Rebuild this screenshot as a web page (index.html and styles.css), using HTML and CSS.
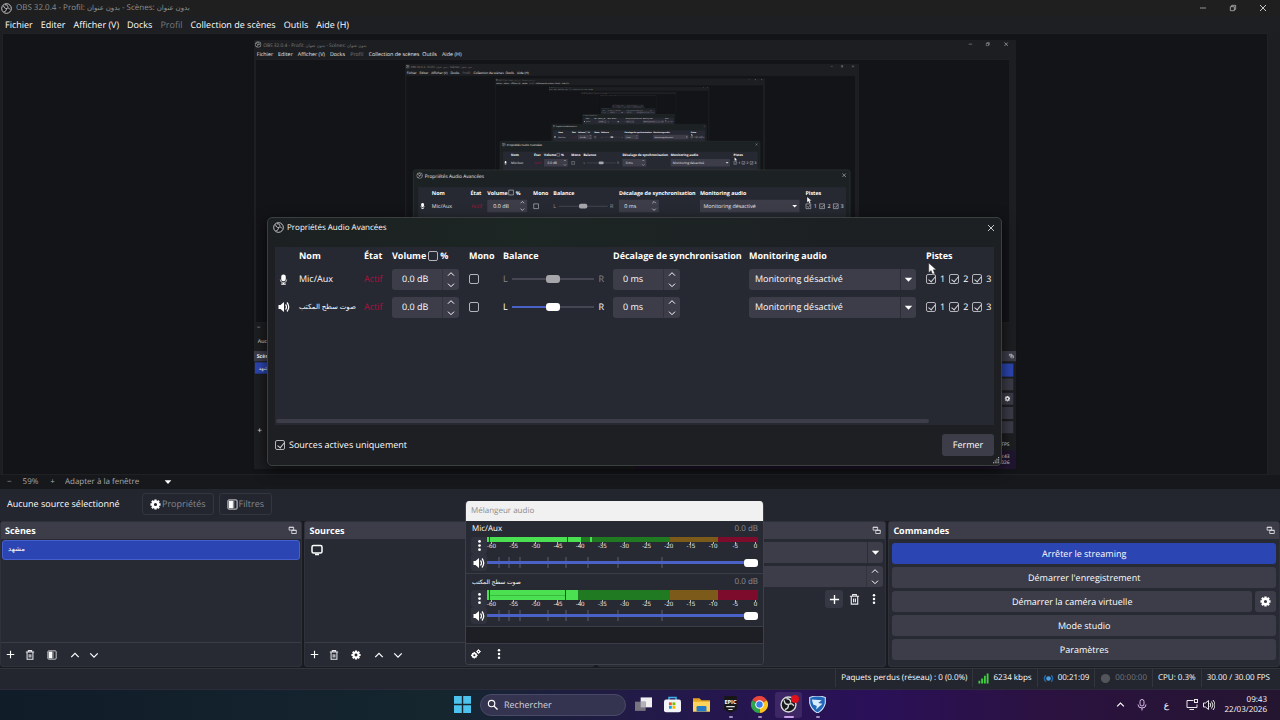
FILE: index.html
```html
<!DOCTYPE html>
<html lang="fr">
<head>
    <meta charset="UTF-8">
    <meta name="viewport" content="width=device-width, initial-scale=1.0">
    <title>OBS 32.0.4</title>
    <link rel="stylesheet" href="styles.css">
</head>
<body>
    <!-- shared icons -->
    <svg class="defs" aria-hidden="true">
        <symbol id="obs" viewBox="0 0 24 24">
            <circle cx="12" cy="12" r="10.5" fill="#17181b" stroke="#d8d8d8" stroke-width="2"/>
            <path d="M6 6c0 4 2.500 6 6 6M12 12c3.500-2 6-1 7.500 2M12 12c0 4-2 6.500-5 7M9 4c4-.5 6.500 2 6 5.500" fill="none" stroke="#d8d8d8" stroke-width="2"/>
        </symbol>
        <symbol id="gear" viewBox="0 0 24 24">
            <path fill="none" stroke="#fefefe" stroke-width="5" d="M12 6a6 6 0 1 1 0 12a6 6 0 1 1 0-12z"/>
            <path stroke="#fefefe" stroke-width="5" d="M12 1v4M12 19v4M1 12h4M19 12h4M4.200 4.200l3 3M16.800 16.800l3 3M19.800 4.200l-3 3M7.200 16.800l-3 3"/>
        </symbol>
        <symbol id="gears" viewBox="0 0 24 24">
            <circle cx="8" cy="15" r="4.500" fill="none" stroke="#fefefe" stroke-width="4"/>
            <path stroke="#fefefe" stroke-width="3" d="M8 7v3M8 20v3M0 15h3M13 15h3M3 10l2 2M13 20l-2-2M3 20l2-2"/>
            <circle cx="18" cy="6" r="3" fill="none" stroke="#fefefe" stroke-width="3"/>
            <path stroke="#fefefe" stroke-width="2" d="M18 0v2M18 10v2M12 6h2M22 6h2"/>
        </symbol>
        <symbol id="filter" viewBox="0 0 24 24">
            <rect x="2" y="2" width="20" height="20" rx="2" fill="none" stroke="#e4e4e8" stroke-width="2"/>
            <path fill="#fefefe" d="M4 4h9v16H4z"/>
            <path fill="#8d8f99" d="M13 4h3v16h-3z"/>
        </symbol>
        <symbol id="plus" viewBox="0 0 24 24"><path d="M12 2v20M2 12h20" stroke="#fefefe" stroke-width="3"/></symbol>
        <symbol id="trash" viewBox="0 0 24 24">
            <path d="M2 5h20M8 4V1.500h8V4M5 6v16h14V6M10 10v8M14 10v8" fill="none" stroke="#e8e8ec" stroke-width="2.500"/>
        </symbol>
        <symbol id="up" viewBox="0 0 24 24"><path d="M3 17l9-9 9 9" fill="none" stroke="#fefefe" stroke-width="3"/></symbol>
        <symbol id="down" viewBox="0 0 24 24"><path d="M3 8l9 9 9-9" fill="none" stroke="#fefefe" stroke-width="3"/></symbol>
        <symbol id="caret" viewBox="0 0 24 24"><path d="M2 7h20L12 18z" fill="#fefefe"/></symbol>
        <symbol id="dots" viewBox="0 0 24 24">
            <circle cx="12" cy="3" r="3" fill="#fefefe"/><circle cx="12" cy="12" r="3" fill="#fefefe"/><circle cx="12" cy="21" r="3" fill="#fefefe"/>
        </symbol>
        <symbol id="float" viewBox="0 0 24 24">
            <path d="M3 3h12v8H3zM3 4h12M10 14v-3h12v9H10zM10 12h12" fill="#3c3d49" stroke="#d4d4da" stroke-width="2.500"/>
        </symbol>
        <symbol id="speaker" viewBox="0 0 24 24">
            <path d="M1 8h4l7-6v20l-7-6H1z" fill="#fefefe"/>
            <path d="M15 7q4 5 0 10M18 3q7 9 0 18" fill="none" stroke="#fefefe" stroke-width="2.500"/>
        </symbol>
        <symbol id="mic" viewBox="0 0 24 24">
            <rect x="7" y="1" width="10" height="15" rx="5" fill="#fefefe"/>
            <path d="M5 12q0 7 7 7t7-7" fill="none" stroke="#fefefe" stroke-width="1.500"/>
            <path d="M12 19v4M7 22h10" fill="none" stroke="#fefefe" stroke-width="2.500"/>
        </symbol>
        <symbol id="screen" viewBox="0 0 24 24">
            <rect x="2" y="3" width="20" height="15" rx="3" fill="none" stroke="#fefefe" stroke-width="3"/>
            <path d="M8 21h8" stroke="#fefefe" stroke-width="3"/>
        </symbol>
        <symbol id="minimize" viewBox="0 0 24 24"><path d="M3 12h18" stroke="#d0d0d0" stroke-width="2"/></symbol>
        <symbol id="restore" viewBox="0 0 24 24"><path d="M4 8h12v12H4zM8 8V4h12v12h-4" fill="none" stroke="#d0d0d0" stroke-width="2"/></symbol>
        <symbol id="close" viewBox="0 0 24 24"><path d="M3 3l18 18M21 3L3 21" stroke="#e8e8e8" stroke-width="2.500"/></symbol>
        <symbol id="pointer" viewBox="0 0 12 18"><path d="M1 1v13l3-3 2 5 3-1-2-5h4z" fill="#fff" stroke="#222" stroke-width=".6"/></symbol>

        <!-- captured desktop, without and with the properties window -->
        <symbol id="desk" viewBox="0 0 1280 720">
            <rect width="1280" height="720" fill="#1d1e21"/>
            <rect x="3" y="33" width="1266" height="441" fill="#131418" stroke="#25262a"/>
            <use href="#obs" x="2" y="2" width="11" height="11"/>
            <text class="cap-title" x="16" y="11">OBS 32.0.4 - Profil: <tspan class="ar">بدون عنوان</tspan> - Scènes: <tspan class="ar">بدون عنوان</tspan></text>
            <g class="cap-menu">
                <text x="5" y="27">Fichier</text><text x="41" y="27">Editer</text><text x="74" y="27">Afficher (V)</text>
                <text x="128" y="27">Docks</text><text x="162" y="27" opacity=".4">Profil</text>
                <text x="193" y="27">Collection de scènes</text><text x="283" y="27">Outils</text><text x="316" y="27">Aide (H)</text>
            </g>
            <use href="#minimize" x="1199" y="3" width="8" height="8"/>
            <use href="#restore" x="1228" y="3" width="8" height="8"/>
            <use href="#close" x="1259" y="3" width="8" height="8"/>
            <path d="M6 482h5" stroke="#aaa"/>
            <text class="cap-menu" x="7" y="508">Aucune source</text>
            <path fill="#3c3d49" d="M0 522h300v17H0zM889 522h391v17H889z"/>
            <text class="cap-head" x="5" y="534">Scènes</text>
            <rect x="2" y="541" width="298" height="19" fill="#2b45b0"/>
            <text class="cap-menu" x="8" y="554">مشهد</text>
            <use href="#float" x="1267" y="526" width="9" height="9"/>
            <rect x="893" y="543" width="382" height="22" fill="#2b45b0"/>
            <path fill="#3a3b46" d="M893 568h382v20H893zM893 592h382v20H893zM893 616h382v20H893zM893 640h382v20H893z"/>
            <use href="#gear" x="1260" y="597" width="10" height="10"/>
            <use href="#plus" x="6" y="651" width="8" height="8"/>
            <text class="cap-small" x="1205" y="681">30.00 / 30.00 FPS</text>
            <path fill="#20152f" d="M640 689h640v31H640z"/>
            <text class="cap-small" x="1248" y="702">09:43</text>
            <text class="cap-small" x="1226" y="712">22/03/2026</text>
        </symbol>
        <symbol id="props" viewBox="0 0 1280 720">
            <rect x="268" y="218" width="733" height="247" rx="4" fill="#1c2123" stroke="#34393a"/>
            <rect x="276" y="247" width="718" height="178" fill="#272932"/>
            <use href="#obs" x="273" y="222" width="11" height="11"/>
            <text class="cap-small" x="287" y="231">Propriétés Audio Avancées</text>
            <use href="#close" x="987" y="223" width="8" height="8"/>
            <g class="cap-head">
                <text x="299" y="260">Nom</text><text x="364" y="260">État</text><text x="392" y="260">Volume</text><text x="440" y="260">%</text>
                <text x="469" y="260">Mono</text><text x="503" y="260">Balance</text><text x="613" y="260">Décalage de synchronisation</text>
                <text x="749" y="260">Monitoring audio</text><text x="926" y="260">Pistes</text>
            </g>
            <use href="#mic" x="278" y="273" width="11" height="11"/>
            <path fill="#3c3d49" d="M392 268h67v21h-67zM613 268h67v21h-67zM749 268h167v21H749z"/>
            <g class="cap-menu">
                <text x="299" y="282">Mic/Aux</text><text class="cap-state" x="365" y="282">Actif</text><text x="402" y="282">0.0 dB</text>
                <text x="503" y="282" opacity=".5">L</text><text x="598" y="282" opacity=".5">R</text><text x="622" y="282">0 ms</text>
                <text x="755" y="282">Monitoring désactivé</text><text x="940" y="282">1</text><text x="963" y="282">2</text><text x="985" y="282">3</text>
            </g>
            <path d="M512 279h82" stroke="#454652" stroke-width="2"/>
            <rect x="546" y="275" width="14" height="8" rx="3" fill="#a5a5aa"/>
            <path fill="none" stroke="#c8c8cc" d="M470 275h8v8h-8zM428 252h8v8h-8zM927 275h8v8h-8zM950 275h8v8h-8zM973 275h8v8h-8zM929 279l2 2 3-4M952 279l2 2 3-4M975 279l2 2 3-4"/>
            <path fill="none" stroke="#fefefe" d="M448 274l3-3 3 3M448 283l3 3 3-3M669 274l3-3 3 3M669 283l3 3 3-3"/>
            <path fill="#fefefe" d="M904 277h8l-4 4z"/>
            <use href="#pointer" x="928" y="262" width="9" height="14"/>
        </symbol>
    </svg>

    <div class="obs">
        <header class="titlebar">
            <svg class="i11"><use href="#obs"/></svg>
            <h1>OBS 32.0.4 - Profil: <bdi class="ar">بدون عنوان</bdi> - Scènes: <bdi class="ar">بدون عنوان</bdi></h1>
            <div class="win-buttons">
                <button aria-label="Réduire"><svg class="i8"><use href="#minimize"/></svg></button>
                <button aria-label="Restaurer"><svg class="i8"><use href="#restore"/></svg></button>
                <button aria-label="Quitter"><svg class="i8"><use href="#close"/></svg></button>
            </div>
        </header>
        <nav class="menubar">
            <button>Fichier</button>
            <button>Editer</button>
            <button>Afficher (V)</button>
            <button>Docks</button>
            <button disabled>Profil</button>
            <button>Collection de scènes</button>
            <button>Outils</button>
            <button>Aide (H)</button>
        </nav>

        <main class="preview">
            <svg class="canvas" viewBox="0 0 1280 720">
                <use href="#desk"/>
                <svg x="254" y="40" width="762" height="429" viewBox="0 0 1280 720">
                    <use href="#desk"/>
                    <svg x="254" y="40" width="762" height="429" viewBox="0 0 1280 720">
                        <use href="#desk"/>
                        <svg x="254" y="40" width="762" height="429" viewBox="0 0 1280 720">
                            <use href="#desk"/>
                            <svg x="254" y="40" width="762" height="429" viewBox="0 0 1280 720">
                                <use href="#desk"/>
                                <svg x="254" y="40" width="762" height="429" viewBox="0 0 1280 720">
                                    <use href="#desk"/>
                                    <use href="#props"/>
                                </svg>
                                <use href="#props"/>
                            </svg>
                            <use href="#props"/>
                        </svg>
                        <use href="#props"/>
                    </svg>
                    <use href="#props"/>
                </svg>
                <use href="#props"/>
            </svg>
        </main>

        <div class="zoombar">
            <button>−</button>
            <span>59%</span>
            <button class="plus">+</button>
            <label class="fit">
                <select aria-label="Échelle"><option>Adapter à la fenêtre</option></select>
                <svg class="i8"><use href="#caret"/></svg>
            </label>
        </div>

        <div class="source-bar">
            <span class="source-name">Aucune source sélectionné</span>
            <button disabled><svg class="i11"><use href="#gear"/></svg>Propriétés</button>
            <button disabled><svg class="i11"><use href="#filter"/></svg>Filtres</button>
        </div>

        <div class="docks">
            <section class="dock">
                <h2>Scènes <svg class="i9"><use href="#float"/></svg></h2>
                <ul class="list">
                    <li class="selected"><bdi class="ar">مشهد</bdi></li>
                </ul>
                <div class="tools">
                    <button aria-label="Ajouter"><svg class="i9"><use href="#plus"/></svg></button>
                    <button aria-label="Supprimer"><svg class="i10"><use href="#trash"/></svg></button>
                    <button class="wide" aria-label="Filtres"><svg class="i10"><use href="#filter"/></svg></button>
                    <button aria-label="Monter"><svg class="i10"><use href="#up"/></svg></button>
                    <button aria-label="Descendre"><svg class="i10"><use href="#down"/></svg></button>
                </div>
            </section>
            <section class="dock">
                <h2>Sources</h2>
                <ul class="list">
                    <li><svg class="i12"><use href="#screen"/></svg></li>
                </ul>
                <div class="tools">
                    <button aria-label="Ajouter"><svg class="i9"><use href="#plus"/></svg></button>
                    <button aria-label="Supprimer"><svg class="i10"><use href="#trash"/></svg></button>
                    <button class="wide" aria-label="Propriétés"><svg class="i10"><use href="#gear"/></svg></button>
                    <button aria-label="Monter"><svg class="i10"><use href="#up"/></svg></button>
                    <button aria-label="Descendre"><svg class="i10"><use href="#down"/></svg></button>
                </div>
            </section>
            <section class="dock" aria-label="Transitions">
                <h2><svg class="i9"><use href="#float"/></svg></h2>
                <div class="transition">
                    <label class="combo"><select aria-label="Transition"><option></option></select><svg class="i9"><use href="#caret"/></svg></label>
                    <div class="spin"><input type="text" aria-label="Durée"><span class="arrows"><svg class="i8"><use href="#up"/></svg><svg class="i8"><use href="#down"/></svg></span></div>
                    <div class="transition-tools">
                        <button class="boxed" aria-label="Ajouter"><svg class="i11"><use href="#plus"/></svg></button>
                        <button aria-label="Supprimer"><svg class="i11"><use href="#trash"/></svg></button>
                        <button aria-label="Options"><svg class="i10"><use href="#dots"/></svg></button>
                    </div>
                </div>
            </section>
            <section class="dock">
                <h2>Commandes <svg class="i9"><use href="#float"/></svg></h2>
                <div class="commands">
                    <button class="active">Arrêter le streaming</button>
                    <button>Démarrer l'enregistrement</button>
                    <div class="split">
                        <button>Démarrer la caméra virtuelle</button>
                        <button aria-label="Configurer"><svg class="i11"><use href="#gear"/></svg></button>
                    </div>
                    <button>Mode studio</button>
                    <button>Paramètres</button>
                </div>
            </section>
        </div>

        <footer class="status">
            <span>Paquets perdus (réseau) : 0 (0.0%)</span>
            <span><svg class="i11" viewBox="0 0 24 24"><path d="M1 17h4v6H1zM7 12h4v11H7zM13 6h4v17h-4zM19 1h4v22h-4z" fill="#3fd13f"/></svg>6234 kbps</span>
            <span><svg class="i11" viewBox="0 0 24 24"><circle cx="12" cy="12" r="5" fill="#4aa3e8"/><path d="M6 5q-6 7 0 14M18 5q6 7 0 14" fill="none" stroke="#2568a8" stroke-width="3"/></svg>00:21:09</span>
            <span class="off"><svg class="i11" viewBox="0 0 24 24"><circle cx="12" cy="12" r="10" fill="#54555a"/></svg>00:00:00</span>
            <span>CPU: 0.3%</span>
            <span>30.00 / 30.00 FPS</span>
        </footer>
    </div>

    <section class="mixer" aria-label="Mélangeur audio">
        <h2>Mélangeur audio</h2>
        <div class="channel">
            <div class="name"><label for="vol1">Mic/Aux</label><span>0.0 dB</span></div>
            <button aria-label="Options"><svg class="i11"><use href="#dots"/></svg></button>
            <div>
                <svg class="meter" viewBox="0 0 271 5" preserveAspectRatio="none">
                    <path fill="#1f7a22" d="M0 0h183v5H0z"/><path fill="#7c5a1a" d="M183 0h48v5h-48z"/><path fill="#7d0b2b" d="M231 0h40v5h-40z"/>
                    <path fill="#4be052" d="M0 0h94v5H0zM103 0h2v5h-2z"/><path fill="#14551a" d="M2 0h1v5H2zM80 0h1v5h-1z"/>
                </svg>
                <div class="scale"><i>-60</i><i>-55</i><i>-50</i><i>-45</i><i>-40</i><i>-35</i><i>-30</i><i>-25</i><i>-20</i><i>-15</i><i>-10</i><i>-5</i><i>0</i></div>
            </div>
            <button aria-label="Muet"><svg class="i12"><use href="#speaker"/></svg></button>
            <div class="fader">
                <svg viewBox="0 0 271 11" preserveAspectRatio="none"><path d="M12 0v11M22 0v11M33 0v11M61 0v11M79 0v11M101 0v11M131 0v11M175 0v11" stroke="#5a5f78"/></svg>
                <input id="vol1" type="range" value="100">
            </div>
        </div>
        <div class="channel">
            <div class="name"><label class="ar" for="vol2">صوت سطح المكتب</label><span>0.0 dB</span></div>
            <button aria-label="Options"><svg class="i11"><use href="#dots"/></svg></button>
            <div>
                <svg class="meter stereo" viewBox="0 0 271 10" preserveAspectRatio="none">
                    <path fill="#1f7a22" d="M0 0h183v10H0z"/><path fill="#7c5a1a" d="M183 0h48v10h-48z"/><path fill="#7d0b2b" d="M231 0h40v10h-40z"/>
                    <path fill="#4be052" d="M0 0h91v10H0z"/><path fill="#14551a" d="M2 0h1v10H2zM78 0h1v10h-1z"/><path fill="#38bb3e" d="M3 5h75v1H3z"/>
                </svg>
                <div class="scale"><i>-60</i><i>-55</i><i>-50</i><i>-45</i><i>-40</i><i>-35</i><i>-30</i><i>-25</i><i>-20</i><i>-15</i><i>-10</i><i>-5</i><i>0</i></div>
            </div>
            <button aria-label="Muet"><svg class="i12"><use href="#speaker"/></svg></button>
            <div class="fader">
                <svg viewBox="0 0 271 11" preserveAspectRatio="none"><path d="M12 0v11M22 0v11M33 0v11M61 0v11M79 0v11M101 0v11M131 0v11M175 0v11" stroke="#5a5f78"/></svg>
                <input id="vol2" type="range" value="100">
            </div>
        </div>
        <div class="mixer-tools">
            <button aria-label="Propriétés avancées"><svg class="i10"><use href="#gears"/></svg></button>
            <button aria-label="Menu"><svg class="i10"><use href="#dots"/></svg></button>
        </div>
    </section>

    <section class="dialog" role="dialog" aria-label="Propriétés Audio Avancées">
        <header>
            <svg class="i11"><use href="#obs"/></svg>
            <h2>Propriétés Audio Avancées</h2>
            <button aria-label="Fermer la fenêtre"><svg class="i8"><use href="#close"/></svg></button>
        </header>
        <div class="sheet">
            <table>
                <colgroup>
                    <col class="c-icon"><col class="c-name"><col class="c-state"><col class="c-volume"><col class="c-mono"><col class="c-balance"><col class="c-sync"><col class="c-monitor"><col>
                </colgroup>
                <thead>
                    <tr>
                        <th></th><th>Nom</th><th>État</th>
                        <th><label class="percent">Volume<input type="checkbox">%</label></th>
                        <th>Mono</th><th>Balance</th><th>Décalage de synchronisation</th><th>Monitoring audio</th><th>Pistes</th>
                    </tr>
                </thead>
                <tbody>
                    <tr>
                        <td class="kind"><svg class="i11"><use href="#mic"/></svg></td>
                        <td>Mic/Aux</td>
                        <td class="state">Actif</td>
                        <td><div class="spin"><input type="text" value="0.0 dB" aria-label="Volume"><span class="arrows"><svg class="i8"><use href="#up"/></svg><svg class="i8"><use href="#down"/></svg></span></div></td>
                        <td><input type="checkbox" aria-label="Mono"></td>
                        <td><div class="balance off"><span>L</span><input type="range" aria-label="Balance" disabled><span>R</span></div></td>
                        <td><div class="spin"><input type="text" value="0 ms" aria-label="Décalage"><span class="arrows"><svg class="i8"><use href="#up"/></svg><svg class="i8"><use href="#down"/></svg></span></div></td>
                        <td><label class="combo"><select aria-label="Monitoring"><option>Monitoring désactivé</option></select><svg class="i9"><use href="#caret"/></svg></label></td>
                        <td><div class="tracks"><label><input type="checkbox" checked>1</label><label><input type="checkbox" checked>2</label><label><input type="checkbox" checked>3</label></div></td>
                    </tr>
                    <tr>
                        <td class="kind"><svg class="i12"><use href="#speaker"/></svg></td>
                        <td><bdi class="ar">صوت سطح المكتب</bdi></td>
                        <td class="state">Actif</td>
                        <td><div class="spin"><input type="text" value="0.0 dB" aria-label="Volume"><span class="arrows"><svg class="i8"><use href="#up"/></svg><svg class="i8"><use href="#down"/></svg></span></div></td>
                        <td><input type="checkbox" aria-label="Mono"></td>
                        <td><div class="balance"><span>L</span><input type="range" aria-label="Balance"><span>R</span></div></td>
                        <td><div class="spin"><input type="text" value="0 ms" aria-label="Décalage"><span class="arrows"><svg class="i8"><use href="#up"/></svg><svg class="i8"><use href="#down"/></svg></span></div></td>
                        <td><label class="combo"><select aria-label="Monitoring"><option>Monitoring désactivé</option></select><svg class="i9"><use href="#caret"/></svg></label></td>
                        <td><div class="tracks"><label><input type="checkbox" checked>1</label><label><input type="checkbox" checked>2</label><label><input type="checkbox" checked>3</label></div></td>
                    </tr>
                </tbody>
            </table>
            <div class="scrollbar"></div>
        </div>
        <footer>
            <label><input type="checkbox" checked>Sources actives uniquement</label>
            <button>Fermer</button>
        </footer>
        <svg class="grip" viewBox="0 0 8 8"><path d="M6 0h1v1H6zM4 2h1v1H4zM6 2h1v1H6zM2 4h1v1H2zM4 4h1v1H4zM6 4h1v1H6zM0 6h1v1H0zM2 6h1v1H2zM4 6h1v1H4zM6 6h1v1H6z" fill="#ddd"/></svg>
    </section>
    <svg class="pointer"><use href="#pointer"/></svg>

    <footer class="taskbar">
        <div class="apps">
            <button aria-label="Démarrer"><svg class="i17" viewBox="0 0 24 24"><path d="M0 0h11v11H0zM13 0h11v11H13zM0 13h11v11H0zM13 13h11v11H13z" fill="#4cc3ee"/></svg></button>
            <label class="search">
                <svg class="i11" viewBox="0 0 24 24"><circle cx="10" cy="10" r="7" fill="none" stroke="#fff" stroke-width="2.500"/><path d="M15 15l8 8" stroke="#fff" stroke-width="3"/></svg>
                <input type="text" placeholder="Rechercher" aria-label="Rechercher">
            </label>
            <button aria-label="Vue des tâches"><svg class="i17" viewBox="0 0 24 24"><path d="M8 2h16v14H8z" fill="#f0f0f0"/><path d="M0 8h15v13H0z" fill="#77747f"/><path d="M8 8h7v8H8z" fill="#b4b2b8"/></svg></button>
            <button aria-label="Store"><svg class="i17" viewBox="0 0 24 24"><path d="M7 6V2h10v4" fill="none" stroke="#41b4ec" stroke-width="2"/><rect y="5" width="24" height="18" rx="3" fill="#f2f4f8"/><path d="M7 9h4v4H7z" fill="#f25022"/><path d="M12 9h4v4h-4z" fill="#7fba00"/><path d="M7 14h4v4H7z" fill="#00a4ef"/><path d="M12 14h4v4h-4z" fill="#ffb900"/></svg></button>
            <button aria-label="Explorateur"><svg class="i17" viewBox="0 0 24 24"><path d="M0 3h9l3 3h12v16H0z" fill="#e6a422"/><path d="M0 8h24v14H0z" fill="#ffd35c"/><path d="M5 22v-6q0-2 2-2h10q2 0 2 2v6z" fill="#2579c6"/></svg></button>
            <button class="running" aria-label="Epic Games">
                <svg class="i17" viewBox="0 0 24 24"><path d="M3 0h18v19l-9 5-9-5z" fill="#17171a"/><text class="epic" x="12" y="11">EPIC</text><path d="M6 15h12M9 19h6" stroke="#ddd" stroke-width="1.500"/></svg>
            </button>
            <button class="running" aria-label="Chrome"><svg class="i17" viewBox="0 0 24 24"><path d="M12 12L1.600 6A12 12 0 0 1 22.400 6z" fill="#e8453c"/><path d="M12 12L22.400 6A12 12 0 0 1 12 24z" fill="#fbc31e"/><path d="M12 12v12A12 12 0 0 1 1.600 6z" fill="#2fa44f"/><circle cx="12" cy="12" r="6" fill="#fff"/><circle cx="12" cy="12" r="4.500" fill="#3b7ded"/></svg></button>
            <button class="running current" aria-label="OBS Studio"><svg class="i17"><use href="#obs"/></svg></button>
            <button class="running" aria-label="Rocket League"><svg class="i17" viewBox="0 0 24 24"><path d="M1 2q11-4 22 0v8q-2 9-11 14Q3 19 1 10z" fill="#2166b8" stroke="#cfe6fa" stroke-width="1.500"/><path d="M4 5l14 1-5 4 6 1-9 8 1-5-5-2z" fill="#d9ecfb"/></svg></button>
        </div>
        <div class="tray">
            <button aria-label="Icônes cachées"><svg class="i9"><use href="#up"/></svg></button>
            <svg class="i12 tray-mic" viewBox="0 0 24 24"><rect x="8" y="1" width="8" height="13" rx="4" fill="none" stroke="#d8b8e8" stroke-width="2"/><path d="M4 11q0 7 8 7t8-7M12 18v5" fill="none" stroke="#d8b8e8" stroke-width="2"/></svg>
            <span class="lang">ع</span>
            <svg class="i12" viewBox="0 0 24 24"><path d="M15 3H2v14h20v-6M7 21h9" fill="none" stroke="#e8e8e8" stroke-width="2"/><rect x="17" y="1" width="6" height="6" fill="none" stroke="#e8e8e8" stroke-width="2"/></svg>
            <svg class="i12" viewBox="0 0 24 24"><path d="M1 8h4l6-5v18l-6-5H1zM14 8q3 4 0 8M17 5q6 7 0 14M20 2q8 10 0 20" fill="none" stroke="#e8e8e8" stroke-width="2"/></svg>
            <time>09:43<br>22/03/2026</time>
        </div>
    </footer>
</body>
</html>
```
FILE: styles.css
```css
* {
    box-sizing: border-box;
}
body {
    margin: 0;
    height: 100vh;
    display: flex;
    flex-direction: column;
    overflow: hidden;
    background: #1d1e22;
    color: #fefefe;
    font-family: "Open Sans", "DejaVu Sans", sans-serif;
    font-size: 9px;
    line-height: 12px;
    text-rendering: geometricPrecision;
}
button, input, select {
    font: inherit;
    color: inherit;
    margin: 0;
    padding: 0;
    border: 0;
    background: none;
    text-rendering: inherit;
}
button {
    display: flex;
    align-items: center;
    justify-content: center;
}
h1, h2 {
    margin: 0;
    font-size: 9px;
    font-weight: 400;
}
svg {
    display: block;
    flex: none;
}
.defs {
    display: none;
}
.ar {
    font-size: 7px;
}
.i8 { width: 8px; height: 8px; }
.i9 { width: 9px; height: 9px; }
.i10 { width: 10px; height: 10px; }
.i11 { width: 11px; height: 11px; }
.i12 { width: 12px; height: 12px; }
.i17 { width: 17px; height: 17px; }

/* main window */
.obs {
    flex: 1;
    min-height: 0;
    display: flex;
    flex-direction: column;
}
.titlebar {
    height: 16px;
    display: flex;
    align-items: center;
    gap: 4px;
    padding: 0 13px 0 1px;
    background: #1f1f1f;
}
.titlebar h1 {
    flex: 1;
    color: #909090;
    font-size: 8px;
}
.win-buttons {
    display: flex;
    gap: 22px;
}
.menubar {
    height: 17px;
    display: flex;
    align-items: center;
    gap: 8px;
    padding: 0 5px;
    background: #1d1f22;
}
.menubar button:disabled {
    color: #777;
}
.preview {
    flex: 1;
    min-height: 0;
    display: flex;
    margin: 0 12px 0 2px;
    padding: 6px 0 5px;
    border: 1px solid #202125;
    background: #131418;
}
.canvas {
    width: 100%;
    height: 100%;
}
.cap-title {
    font-size: 8px;
    fill: #808080;
}
.cap-menu {
    font-size: 9px;
    fill: #e6e6e6;
}
.cap-small {
    font-size: 8px;
    fill: #e6e6e6;
}
.cap-head {
    font-size: 9px;
    font-weight: 700;
    fill: #fefefe;
}
.cap-state {
    fill: #a8123f;
}

.zoombar {
    height: 14px;
    display: flex;
    align-items: center;
    padding-left: 7px;
    background: #17181b;
    color: #a8a8ac;
    font-size: 8px;
}
.zoombar span {
    margin-left: 11px;
}
.zoombar .plus {
    margin: 0 10px 0 12px;
}
.fit {
    display: flex;
    align-items: center;
}
.fit select {
    width: 99px;
    appearance: none;
}

.source-bar {
    height: 32px;
    display: flex;
    align-items: center;
    gap: 5px;
    padding: 0 0 2px 7px;
    background: #23262e;
}
.source-name {
    width: 130px;
}
.source-bar button {
    height: 22px;
    padding: 0 7px;
    gap: 1px;
    border: 1px solid #33353f;
    border-radius: 3px;
    color: #85868e;
}

/* docks */
.docks {
    height: 147px;
    display: grid;
    grid-template-columns: 302fr 290fr 289fr 391fr;
    gap: 2px;
    padding-bottom: 1px;
    background: #1a1b20;
}
.dock {
    display: flex;
    flex-direction: column;
    background: #272a33;
    border: 1px solid #30323b;
    border-radius: 3px;
}
.dock h2 {
    height: 17px;
    flex: none;
    display: flex;
    align-items: center;
    padding: 0 4px;
    background: #3c3d49;
    font-weight: 700;
}
.dock h2 svg {
    margin-left: auto;
}
.list {
    flex: 1;
    margin: 0;
    padding: 1px;
    list-style: none;
}
.list li {
    height: 20px;
    display: flex;
    align-items: center;
    padding: 0 5px;
}
.list .selected {
    background: #2b45b3;
    border: 1px solid #4560cc;
    border-radius: 3px;
}
.tools {
    height: 24px;
    display: flex;
    align-items: center;
    border-top: 1px solid #3a3c46;
}
.tools button {
    width: 19px;
    height: 18px;
}
.tools .wide {
    width: 26px;
}
.transition {
    display: flex;
    flex-direction: column;
    gap: 3px;
    padding: 3px 2px;
}
.transition-tools {
    display: flex;
    justify-content: flex-end;
    gap: 2px;
}
.transition-tools button {
    width: 18px;
    height: 18px;
}
.transition-tools .boxed {
    background: #363843;
    border-radius: 3px;
}
.commands {
    display: flex;
    flex-direction: column;
    gap: 3px;
    padding: 4px 3px;
}
.commands button {
    flex: 1;
    min-height: 21px;
    background: #3c3d49;
    border-radius: 3px;
}
.commands .active {
    background: #2b45b3;
}
.split {
    display: flex;
    gap: 3px;
}
.commands .split button:last-child {
    flex: none;
    width: 21px;
}

.status {
    height: 21px;
    display: flex;
    justify-content: flex-end;
    padding: 0 5px 2px 0;
    background: #23262e;
    border-top: 1px solid #33353d;
    font-size: 8px;
}
.status span {
    display: flex;
    align-items: center;
    gap: 4px;
    padding: 0 5px;
    border-left: 1px solid #33353d;
}
.status .off {
    color: #77787e;
}

/* form controls */
input[type="checkbox"] {
    appearance: none;
    width: 10px;
    height: 10px;
    flex: none;
    display: block;
    border: 1px solid #b4b5bc;
    border-radius: 2px;
}
input[type="checkbox"]:checked::before {
    content: "";
    display: block;
    width: 3px;
    height: 6px;
    margin: 0 0 0 3px;
    border: solid #d8d8dc;
    border-width: 0 1px 1px 0;
    transform: rotate(40deg);
}
input[type="range"] {
    appearance: none;
    display: block;
    min-width: 0;
    height: 9px;
    background: linear-gradient(#4a62c8, #4a62c8) center / 100% 3px no-repeat;
}
input[type="range"]::-webkit-slider-thumb {
    appearance: none;
    width: 14px;
    height: 8px;
    border-radius: 3px;
    background: #fff;
}
.spin, .combo {
    display: flex;
    height: 21px;
    background: #3c3d49;
    border-radius: 3px;
}
.spin input {
    flex: 1;
    min-width: 0;
    padding-left: 10px;
}
.arrows {
    width: 17px;
    display: flex;
    flex-direction: column;
    align-items: center;
    justify-content: space-between;
    padding: 1px 0;
    border-left: 1px solid #31323c;
}
.combo {
    align-items: center;
    padding-right: 3px;
}
.combo select {
    flex: 1;
    height: 21px;
    margin-right: 3px;
    padding-left: 6px;
    appearance: none;
    border-right: 1px solid #2b2c36;
}

/* audio mixer */
.mixer {
    position: absolute;
    left: 465px;
    bottom: 55px;
    width: 299px;
    height: 164px;
    display: flex;
    flex-direction: column;
    overflow: hidden;
    border: 1px solid #3e404a;
    border-top: 0;
    border-radius: 4px;
    background: #1d1f25;
}
.mixer h2 {
    height: 20px;
    padding: 4px 5px;
    background: #f1f1f1;
    color: #8c8c8c;
    font-size: 8px;
}
.channel {
    display: grid;
    grid-template-columns: 16px 1fr;
    grid-template-rows: 16px 17px 17px;
    padding: 0 5px 2px;
    border-bottom: 1px solid #3a3c46;
    background: #272a33;
}
.channel > button {
    background: #30323d;
    border-radius: 3px;
}
.name {
    grid-column: 1 / 3;
    display: flex;
    align-items: center;
    justify-content: space-between;
    padding-left: 1px;
    font-size: 8px;
}
.name .ar {
    font-size: 6px;
}
.name span {
    color: #8f9098;
}
.meter {
    width: 100%;
    height: 5px;
}
.stereo {
    height: 10px;
}
.scale {
    display: flex;
    justify-content: space-between;
    font-size: 6px;
    line-height: 8px;
}
.scale i {
    width: 9px;
    font-style: normal;
    text-align: center;
    background: linear-gradient(#b0b0b6, #b0b0b6) top / 1px 2px no-repeat;
}
.scale i:last-child {
    width: 5px;
}
.fader {
    display: grid;
    align-items: center;
}
.fader svg, .fader input {
    grid-area: 1 / 1;
    width: 100%;
    height: 11px;
}
.mixer-tools {
    height: 21px;
    display: flex;
    align-items: center;
    gap: 13px;
    margin-top: auto;
    padding-left: 5px;
    background: #272a33;
    border-top: 1px solid #3a3c46;
}

/* advanced audio properties */
.dialog {
    position: absolute;
    left: 267px;
    top: 217px;
    width: 735px;
    height: 249px;
    display: flex;
    flex-direction: column;
    padding: 0 7px;
    border: 1px solid #3b403f;
    border-radius: 5px;
    background: #1d1f23 linear-gradient(to right, #1c2022, #1c2623 35%, #1d2023 75%) top / 100% 29px no-repeat;
    box-shadow: 0 4px 14px #000a;
}
.dialog header {
    height: 19px;
    flex: none;
    display: flex;
    align-items: center;
    gap: 3px;
    margin: 0 -1px 0 -2px;
}
.dialog h2 {
    font-size: 8px;
}
.dialog header button {
    margin-left: auto;
    width: 8px;
}
.sheet {
    flex: 1;
    display: flex;
    flex-direction: column;
    margin-top: 10px;
    padding: 0 0 2px 1px;
    background: #272932;
}
.sheet table {
    width: 100%;
    table-layout: fixed;
    border-collapse: collapse;
}
.sheet th, .sheet td {
    padding: 0;
    text-align: left;
    white-space: nowrap;
}
.sheet th {
    height: 18px;
}
.sheet td {
    height: 28px;
}
.c-icon { width: 23px; }
.c-name { width: 65px; }
.c-state { width: 28px; }
.c-volume { width: 77px; }
.c-mono { width: 34px; }
.c-balance { width: 110px; }
.c-sync { width: 136px; }
.c-monitor { width: 177px; }
.kind svg {
    margin-left: 2px;
}
.sheet .state {
    color: #a8123f;
}
.percent {
    display: flex;
    align-items: center;
    gap: 2px;
}
.sheet .spin {
    width: 67px;
}
.sheet .combo {
    width: 167px;
}
.balance {
    width: 101px;
    display: flex;
    align-items: center;
    gap: 4px;
}
.balance input {
    flex: 1;
    background-image: linear-gradient(to right, #4a62c8 50%, #454652 50%);
    background-size: 100% 2px;
}
.balance.off {
    color: #85868e;
}
.balance.off input {
    background-image: linear-gradient(#454652, #454652);
}
.balance.off input::-webkit-slider-thumb {
    background: #a5a5aa;
}
.tracks {
    display: flex;
    gap: 4px;
}
.tracks label {
    display: flex;
    align-items: center;
    gap: 4px;
}
.scrollbar {
    height: 4px;
    width: 91%;
    margin-top: auto;
    background: #3c3d49;
    border-radius: 2px;
}
.dialog footer {
    height: 40px;
    flex: none;
    display: flex;
    align-items: center;
    justify-content: space-between;
}
.dialog footer label {
    display: flex;
    align-items: center;
    gap: 4px;
}
.dialog footer button {
    width: 52px;
    height: 22px;
    background: #3c3d49;
    border-radius: 3px;
}
.grip {
    position: absolute;
    right: 1px;
    bottom: 1px;
    width: 7px;
    height: 7px;
}
.pointer {
    position: absolute;
    left: 928px;
    top: 262px;
    width: 9px;
    height: 14px;
}

/* taskbar */
.taskbar {
    height: 31px;
    display: grid;
    grid-template-columns: 1fr auto 1fr;
    align-items: center;
    padding-bottom: 1px;
    border-top: 1px solid #2c2a3c;
    background: linear-gradient(to right, #101c28, #15262f 35%, #221a48 50%, #2a1058 68%, #2b1240 82%, #241530);
}
.apps {
    grid-column: 2;
    display: flex;
    align-items: center;
    gap: 2px;
}
.apps button {
    position: relative;
    width: 27px;
    height: 26px;
    border-radius: 3px;
}
.search {
    width: 146px;
    height: 22px;
    margin: 0 2px;
    display: flex;
    align-items: center;
    gap: 6px;
    padding-left: 6px;
    border: 1px solid #4a4a68;
    border-radius: 11px;
    background: #343450;
}
.search input {
    width: 100px;
    outline: 0;
}
.search input::placeholder {
    color: #d4d4dc;
}
.running::after {
    content: "";
    position: absolute;
    bottom: 0;
    width: 4px;
    height: 2px;
    border-radius: 1px;
    background: #a08cc0;
}
.apps .current {
    background: #3d2764;
}
.current::after {
    width: 10px;
    background: #c8a0e8;
}
.current::before {
    content: "";
    position: absolute;
    right: 3px;
    top: 3px;
    width: 8px;
    height: 8px;
    border-radius: 50%;
    background: #e0101c;
}
.epic {
    font-size: 8px;
    font-weight: 700;
    text-anchor: middle;
    fill: #fff;
}
.tray {
    display: flex;
    align-items: center;
    justify-content: flex-end;
    gap: 5px;
    padding-right: 13px;
}
.tray-mic {
    margin-left: 6px;
}
.lang {
    width: 28px;
    text-align: center;
}
.tray time {
    font-size: 8px;
    line-height: 10px;
    text-align: right;
    margin-left: 5px;
}
```
